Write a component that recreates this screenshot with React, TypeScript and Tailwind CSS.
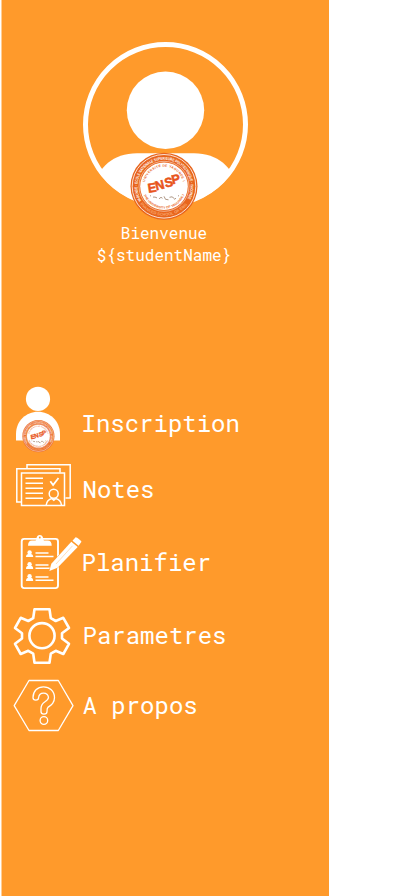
import React from "react";

const MONO =
  "font-['Roboto_Mono','DejaVu_Sans_Mono','Liberation_Mono',monospace]";

function Stamp({ id, small = false }: { id: string; small?: boolean }) {
  return (
    <g>
      <circle r="33.5" fill={small ? "#ec7333" : "#e8651d"} />
      <circle r="31.8" fill="none" stroke="#fff" strokeWidth=".8" />
      <circle r="23.8" fill="#fff" />
      <circle r="25" fill="none" stroke="#fff" strokeWidth=".5" />
      <g className="font-['Liberation_Sans',sans-serif]" fontWeight="700">
        <defs>
          <path id={`${id}-top`} d="M-22.3 14.5A26.6 26.6 0 1 1 22.3 14.5" />
          <path id={`${id}-bottom`} d="M-23 18.6A29.6 29.6 0 0 0 23 18.6" />
          <path id={`${id}-in-top`} d="M-19.5 -2A19.6 19.6 0 0 1 19.5 -2" />
          <path id={`${id}-in-bottom`} d="M-21.5 5A22 22 0 0 0 21.5 5" />
        </defs>
        <text fill="#fff" fontSize="4.1" textLength="111" lengthAdjust="spacingAndGlyphs">
          <textPath href={`#${id}-top`}>
            YAOUNDE · ECOLE NATIONALE SUPERIEURE POLYTECHNIQUE · YAOUNDE
          </textPath>
        </text>
        <text fill="#f9a66b" fontSize="4" textAnchor="middle">
          <textPath href={`#${id}-bottom`} startOffset="50%">
            ADVANCED SCHOOL OF ENGIN
          </textPath>
        </text>
        <g fill="#e8651d" fontSize="3.3" textAnchor="middle">
          <text letterSpacing=".35">
            <textPath href={`#${id}-in-top`} startOffset="50%">
              UNIVERSITE DE YAOUNDE I
            </textPath>
          </text>
          <text>
            <textPath href={`#${id}-in-bottom`} startOffset="50%">
              THE UNIVERSITY OF YAOUNDE I
            </textPath>
          </text>
        </g>
        <g fill="#e8541b" stroke="#e8541b" strokeWidth=".5" fontSize="12.800">
          <text transform="translate(-15.500 6.500) rotate(-9)">E</text>
          <text transform="translate(-7.700 4.200) rotate(-14)">N</text>
          <text transform="translate(1.600 1.200) rotate(-12)">S</text>
          <text transform="translate(8.600 -2) rotate(-12)">P</text>
        </g>
      </g>
      <path
        d="M-14 9.500h1M-11 10.800h2l2 .8M-5 12.500l2-1.500 1.500 1M0 10l1.500 3 3 .5M5.500 11l2.500-.5 2 1.500M10 13l2-1M14 9.500h1"
        fill="none"
        stroke="#9b7d68"
        strokeWidth={small ? 1.4 : 0.8}
      />
    </g>
  );
}

function Avatar() {
  return (
    <svg width="168" height="180" viewBox="81 40 168 180" className="block">
      <defs>
        <clipPath id="avatar-clip">
          <circle cx="165.5" cy="124.5" r="82" />
        </clipPath>
      </defs>
      <circle cx="165.5" cy="124.5" r="80" fill="none" stroke="#fff" strokeWidth="5" />
      <circle cx="165.5" cy="110.2" r="38.7" fill="#fff" />
      <path
        clipPath="url(#avatar-clip)"
        d="M94 186C98 168 113 153.300 137 153.300H194C218 153.300 233 168 237 186V210H94Z"
        fill="#fff"
      />
      <g transform="translate(164 186.300)">
        <Stamp id="avatar" />
      </g>
    </svg>
  );
}

function PersonIcon() {
  return (
    <svg width="46" height="68" viewBox="15 386 46 68">
      <circle cx="38" cy="398.900" r="12.100" fill="#fff" />
      <path d="M16 440.500V434C16 421 26 411.700 38 411.700S60 421 60 434v6.500Z" fill="#fff" />
      <g transform="translate(38.400 436.200) scale(.48)">
        <Stamp id="person" small />
      </g>
    </svg>
  );
}

function NotesIcon() {
  return (
    <svg width="58" height="46" viewBox="14 462 58 46" fill="none" stroke="#fff" strokeWidth="1.500">
      <path d="M27 468.500V464.800H70.200V498H65.500M21 502H16.800V468.800H60V472.500" />
      <path d="M21.500 473H64.500V505.500H21.500Z" />
      <path d="M25.500 478.300H43M25.500 483.300H43M25.500 488.300H43M25.500 493.300H43M25.500 498.300H43" />
      <path d="M50.300 481.200l2.800 3.800 5.400-7" strokeWidth="1.800" />
      <circle cx="53.700" cy="493.800" r="4.500" />
      <path d="M46.200 505.200C46.700 501 49 499.300 52 498.600L53.800 500.200 55.600 498.600C59 499.400 61 501.200 61.500 505.200" />
    </svg>
  );
}

function PlanIcon() {
  return (
    <svg width="64" height="58" viewBox="19 533 64 58">
      <rect x="21.700" y="538.900" width="36.300" height="49.200" rx="2.500" fill="none" stroke="#fff" strokeWidth="1.900" />
      <path d="M28 545.800c0-3.600 1.500-5.300 4-5.300H34.700c1 0 1.500-.6 1.600-1.300C36.500 536.500 37.800 535 39.800 535s3.300 1.500 3.500 4.200c.1.700.6 1.300 1.600 1.300H47.700c2.600 0 4 1.700 4 5.300Z" fill="#fff" />
      <circle cx="39.800" cy="537.500" r=".9" fill="#ff9a2b" />
      {[552.4, 564.3, 576.2].map((y) => (
        <g key={y} fill="#fff">
          <circle cx="29.600" cy={y} r="2.200" />
          <path d={`M26 ${y + 4.7}c0-2.400 1-2.900 2.500-3.200h2.200c1.500.3 2.500.8 2.500 3.200Z`} />
          <path d={`M35.500 ${y + 0.7}H48.500M35.500 ${y + 4}H53.500`} stroke="#fff" strokeWidth="1.500" />
        </g>
      ))}
      <path d="M49.400 571L51.300 563.800 71.300 541.700 77.700 547 57.500 567.800Z" fill="#fff" stroke="#ff9a2b" strokeWidth="1" paintOrder="stroke" />
      <path d="M72.500 540.700L75.600 537.200C77.500 537.500 80.300 539.800 81.500 541.800L78.600 545.700Z" fill="#fff" />
      <path d="M56 564L72.500 545.800" stroke="#ffc789" strokeWidth=".6" />
    </svg>
  );
}

function GearIcon() {
  return (
    <svg width="58" height="58" viewBox="13 607 58 58" fill="none" stroke="#fff" strokeWidth="2.600" strokeLinejoin="round">
      <path d="M34.500 609.300H49.500L50.800 618.200 55.700 621 63.300 617.800 69 628 62 633.300V638.500L69 643.800 63.300 654 55.700 650.800 50.800 653.600 49.500 662.700H34.500L33.200 653.600 28.300 650.800 20.700 654 15 643.800 22 638.500V633.300L15 628 20.700 617.800 28.300 621 33.200 618.200Z" />
      <circle cx="42" cy="635.700" r="12.600" />
    </svg>
  );
}

function HelpIcon() {
  return (
    <svg width="62" height="54" viewBox="13 679 62 54" fill="none" stroke="#fff" strokeWidth="1.300" strokeLinejoin="round">
      <path d="M29 680.500H58.300L73 705.700 58.300 730.500H29L14.200 705.700Z" />
      <path d="M33 697.500C33 691 37.500 686.800 43.500 686.800S54.500 691.200 54.500 697.500C54.500 703 51.200 705 48 707.300 47 708.200 47 709.300 47 711.500 47 715 41 715 41 711.500V708.500C41 704.800 42.500 703.500 45 701.800 47.500 700.200 48.500 699.500 48.500 697.300A5 5 0 0 0 38.600 697.500C38.600 701 33 701 33 697.500Z" />
      <circle cx="43.900" cy="720.500" r="3.800" />
    </svg>
  );
}

export default function App() {
  return (
    <div className="h-[896px] w-[414px] overflow-hidden bg-white">
      <aside className={`ml-px h-full w-[328px] border-l border-[#ffcd95] bg-[#ff9a2b] text-white ${MONO}`}>
        <header className="flex flex-col items-center pt-10 pr-[1px]">
          <Avatar />
          <p className="mt-[2px] pr-[2px] text-center text-base leading-[22px]">
            Bienvenue
            <br />
            {"${studentName}"}
          </p>
        </header>
        <nav className="mt-[120px] text-2xl">
          <a className="flex h-[68px] items-center pl-[13px]">
            <PersonIcon />
            <span className="ml-[20.5px] mt-[5px]">Inscription</span>
          </a>
          <a className="mt-2 flex h-[46px] items-center pl-[12px]">
            <NotesIcon />
            <span className="ml-[10.5px] mt-[7px]">Notes</span>
          </a>
          <a className="mt-[25px] flex h-[58px] items-center pl-[17px]">
            <PlanIcon />
            <span className="-ml-[1.5px]">Planifier</span>
          </a>
          <a className="mt-4 flex h-[58px] items-center pl-[11px]">
            <GearIcon />
            <span className="-mt-[2px] ml-[11.5px]">Parametres</span>
          </a>
          <a className="mt-[14px] flex h-[54px] items-center pl-[11px]">
            <HelpIcon />
            <span className="-mt-[2px] ml-[7.5px]">A propos</span>
          </a>
        </nav>
      </aside>
    </div>
  );
}
